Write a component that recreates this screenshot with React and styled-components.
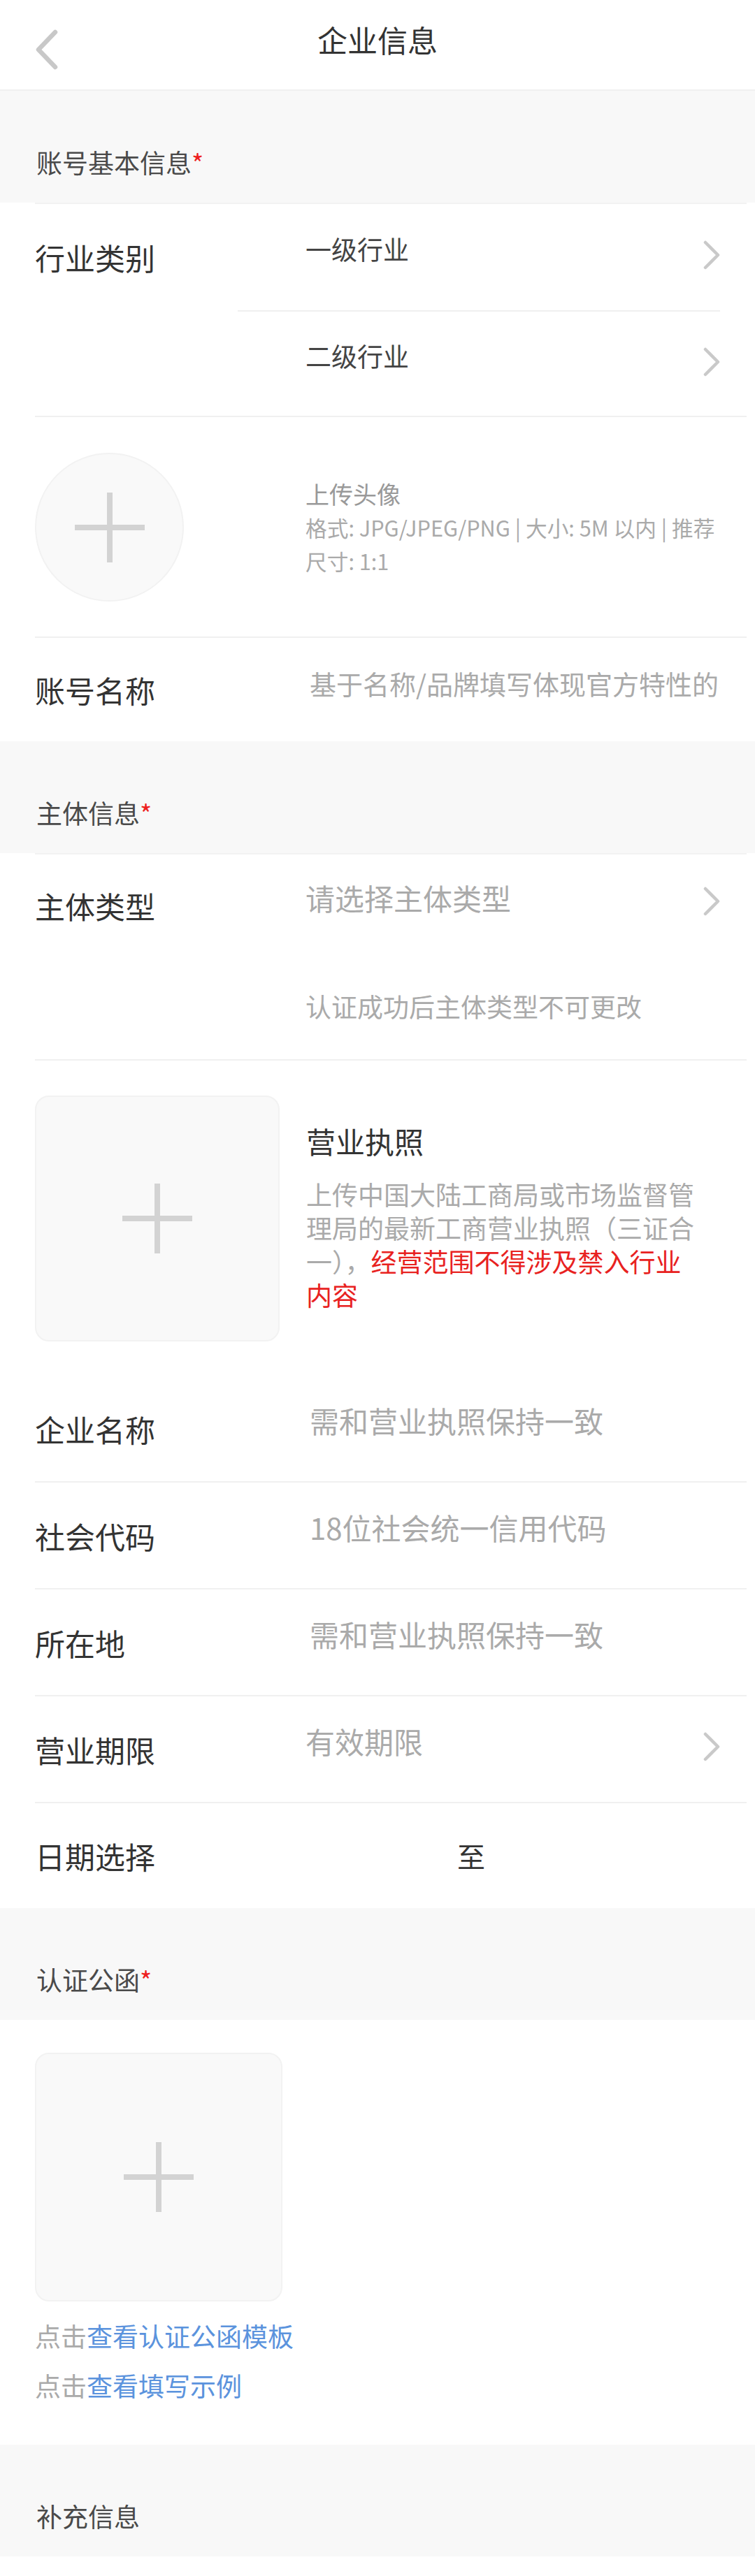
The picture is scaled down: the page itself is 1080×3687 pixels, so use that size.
import React from 'react';
import styled, { createGlobalStyle } from 'styled-components';

const GlobalStyle = createGlobalStyle`
  html, body { margin: 0; padding: 0; background: #ffffff; }
  body { font-family: "Noto Sans CJK SC", "Noto Sans", sans-serif; }
  * { box-sizing: border-box; }
`;

const Page = styled.div`
  width: 1080px;
  min-height: 3687px;
  background: #ffffff;
`;

const Header = styled.header`
  height: 130px;
  border-bottom: 2px solid #f0f0f0;
  display: grid;
  grid-template-columns: 1fr auto 1fr;
  align-items: start;
  padding: 0 50px;
`;

const BackButton = styled.button`
  justify-self: start;
  margin-top: 42px;
  padding: 0;
  border: 0;
  background: none;
  display: flex;
`;

const Title = styled.h1`
  margin: 30px 0 0;
  font-size: 43px;
  line-height: 52px;
  font-weight: 400;
  color: #333333;
`;

const SectionHeader = styled.div`
  height: 160px;
  background: #f8f8f8;
  padding: 80px 52px 0;
  font-size: 37px;
  line-height: 44px;
  color: #4a4a4a;
`;

const Required = styled.span`
  color: #ee2020;
`;

const Row = styled.div`
  display: flex;
  align-items: ${(p) => p.$align || 'center'};
  margin: 0 12px 0 50px;
  padding: ${(p) => p.$pad || '0 38px 0 0'};
  min-height: ${(p) => p.$h || 153}px;
  border-top: ${(p) => (p.$top ? '2px solid #f2f2f2' : '0')};
  border-bottom: ${(p) => (p.$last ? '0' : '2px solid #f0f0f0')};
`;

const Label = styled.div`
  width: 290px;
  flex: none;
  font-size: 43px;
  line-height: 56px;
  color: #333333;
  display: flex;
  align-items: center;
  height: ${(p) => (p.$h ? `${p.$h}px` : 'auto')};
`;

const Field = styled.div`
  flex: 1;
  min-width: 0;
  display: flex;
  flex-direction: column;
`;

const Control = styled.div`
  flex: 1;
  min-width: 0;
  display: flex;
  align-items: center;
  padding-left: ${(p) => (p.$input ? 103 : 97)}px;
`;

const SubRow = styled(Control)`
  flex: none;
  width: 100%;
  height: ${(p) => p.$h}px;
  border-bottom: ${(p) => (p.$line ? '2px solid #f0f0f0' : '0')};
`;

const Value = styled.span`
  flex: 1;
  min-width: 0;
  font-size: ${(p) => p.$size || 42}px;
  line-height: 1.4;
  color: ${(p) => (p.$filled ? '#444444' : '#aaaaaa')};
  white-space: nowrap;
  overflow: ${(p) => (p.$clip ? 'hidden' : 'visible')};
  margin-bottom: ${(p) => (p.$shift === undefined ? 22 : p.$shift)}px;
`;

const ChevronIcon = styled.svg`
  flex: none;
  margin-bottom: ${(p) => p.$shift || 6}px;
`;

const UploadBox = styled.div`
  flex: none;
  width: ${(p) => p.$w}px;
  height: ${(p) => p.$h}px;
  background: #f9f9f9;
  border: 2px solid #f2f2f2;
  border-radius: ${(p) => (p.$round ? '50%' : '20px')};
  display: flex;
  align-items: center;
  justify-content: center;
`;

const AvatarText = styled.div`
  flex: 1;
  padding-left: 97px;
  line-height: 48px;
`;

const UploadTitle = styled.div`
  font-size: 34px;
  color: #999999;
`;

const FormatHint = styled.div`
  font-size: 30.7px;
  color: #aaaaaa;
  white-space: nowrap;
`;

const LicenseRow = styled.div`
  display: flex;
  align-items: flex-start;
  gap: 38px;
  margin: 0 12px 0 50px;
  padding: 50px 0 49px;
`;

const LicenseText = styled.div`
  margin-top: 40px;
  width: 560px;
`;

const LicenseTitle = styled.div`
  font-size: 42px;
  line-height: 50px;
  color: #333333;
`;

const Desc = styled.p`
  margin: 27px 0 0;
  font-size: 37px;
  line-height: 48px;
  color: #aaaaaa;
`;

const Danger = styled.span`
  color: #e8221f;
`;

const Hint = styled.span`
  font-size: 37px;
  line-height: 1.3;
  color: #aaaaaa;
  margin-bottom: 4px;
`;

const DateRange = styled.div`
  flex: 1;
  display: grid;
  grid-template-columns: 217px auto 1fr;
  align-items: center;
  padding-left: 97px;
`;

const DateSep = styled.span`
  font-size: 40px;
  line-height: 1.3;
  color: #333333;
`;

const LetterBlock = styled.div`
  padding: 47px 50px 49px;
`;

const LinkLine = styled.div`
  font-size: 37px;
  line-height: 71px;
  color: #aaaaaa;
  margin-top: ${(p) => (p.$first ? 14 : 0)}px;
`;

const TextLink = styled.a`
  color: #5b93dd;
  text-decoration: none;
`;

const Chevron = ({ shift }) => (
  <ChevronIcon $shift={shift} width="24" height="42" viewBox="0 0 24 42">
    <path d="M3 3L21 21L3 39" fill="none" stroke="#c9c9c9" strokeWidth="4.5" strokeLinecap="round" strokeLinejoin="round" />
  </ChevronIcon>
);

const Plus = () => (
  <svg width="100" height="100" viewBox="0 0 100 100">
    <rect x="46" y="0" width="8" height="100" fill="#d3d3d3" />
    <rect x="0" y="46" width="100" height="8" fill="#d3d3d3" />
  </svg>
);

const BackIcon = () => (
  <svg width="34" height="58" viewBox="0 0 34 58">
    <path d="M29 4L5 29L29 54" fill="none" stroke="#c8c8c8" strokeWidth="6.5" strokeLinecap="round" strokeLinejoin="round" />
  </svg>
);

const TextRow = ({ label, placeholder, chevron, last, input }) => (
  <Row $h={153} $last={last}>
    <Label>{label}</Label>
    <Control $input={input}>
      <Value>{placeholder}</Value>
      {chevron && <Chevron />}
    </Control>
  </Row>
);

export default function App() {
  return (
    <Page>
      <GlobalStyle />
      <Header>
        <BackButton aria-label="返回">
          <BackIcon />
        </BackButton>
        <Title>企业信息</Title>
      </Header>

      <SectionHeader>
        账号基本信息<Required>*</Required>
      </SectionHeader>

      <Row $align="flex-start" $top $h={305}>
        <Label $h={152}>行业类别</Label>
        <Field>
          <SubRow $h={154} $line>
            <Value $size={37} $filled>一级行业</Value>
            <Chevron />
          </SubRow>
          <SubRow $h={149}>
            <Value $size={37} $filled>二级行业</Value>
            <Chevron />
          </SubRow>
        </Field>
      </Row>

      <Row $pad="50px 38px 49px 0" $h={316}>
        <Label>
          <UploadBox $round $w={213} $h={213}>
            <Plus />
          </UploadBox>
        </Label>
        <AvatarText>
          <UploadTitle>上传头像</UploadTitle>
          <FormatHint>格式: JPG/JPEG/PNG | 大小: 5M 以内 | 推荐</FormatHint>
          <FormatHint>尺寸: 1:1</FormatHint>
        </AvatarText>
      </Row>

      <Row $h={148} $last>
        <Label>账号名称</Label>
        <Control $input>
          <Value $size={38} $shift={18} $clip>基于名称/品牌填写体现官方特性的名称</Value>
        </Control>
      </Row>

      <SectionHeader>
        主体信息<Required>*</Required>
      </SectionHeader>

      <Row $align="flex-start" $top $h={295}>
        <Label $h={145}>主体类型</Label>
        <Field>
          <SubRow $h={146}>
            <Value>请选择主体类型</Value>
            <Chevron shift={12} />
          </SubRow>
          <SubRow $h={147}>
            <Hint>认证成功后主体类型不可更改</Hint>
          </SubRow>
        </Field>
      </Row>

      <LicenseRow>
        <UploadBox $w={350} $h={352}>
          <Plus />
        </UploadBox>
        <LicenseText>
          <LicenseTitle>营业执照</LicenseTitle>
          <Desc>
            上传中国大陆工商局或市场监督管理局的最新工商营业执照（三证合一），
            <Danger>经营范围不得涉及禁入行业内容</Danger>
          </Desc>
        </LicenseText>
      </LicenseRow>

      <TextRow label="企业名称" placeholder="需和营业执照保持一致" input />
      <TextRow label="社会代码" placeholder="18位社会统一信用代码" input />
      <TextRow label="所在地" placeholder="需和营业执照保持一致" input />
      <TextRow label="营业期限" placeholder="有效期限" chevron />
      <Row $h={150} $last>
        <Label>日期选择</Label>
        <DateRange>
          <span />
          <DateSep>至</DateSep>
          <span />
        </DateRange>
      </Row>

      <SectionHeader>
        认证公函<Required>*</Required>
      </SectionHeader>

      <LetterBlock>
        <UploadBox $w={354} $h={356}>
          <Plus />
        </UploadBox>
        <LinkLine $first>
          点击<TextLink href="#template">查看认证公函模板</TextLink>
        </LinkLine>
        <LinkLine>
          点击<TextLink href="#example">查看填写示例</TextLink>
        </LinkLine>
      </LetterBlock>

      <SectionHeader>补充信息</SectionHeader>
    </Page>
  );
}
